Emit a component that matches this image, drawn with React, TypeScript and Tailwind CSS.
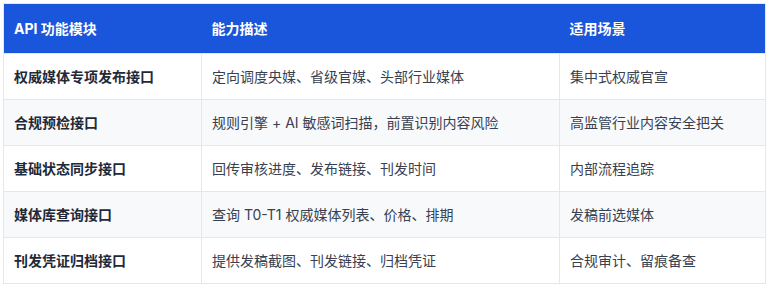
const rows = [
  ['权威媒体专项发布接口', '定向调度央媒、省级官媒、头部行业媒体', '集中式权威官宣'],
  ['合规预检接口', '规则引擎 + AI 敏感词扫描，前置识别内容风险', '高监管行业内容安全把关'],
  ['基础状态同步接口', '回传审核进度、发布链接、刊发时间', '内部流程追踪'],
  ['媒体库查询接口', '查询 T0-T1 权威媒体列表、价格、排期', '发稿前选媒体'],
  ['刊发凭证归档接口', '提供发稿截图、刊发链接、归档凭证', '合规审计、留痕备查'],
];

export default function App() {
  return (
    <div className="p-[3px] bg-white font-['Inter','Noto_Sans_CJK_SC',sans-serif] text-sm">
      <table className="w-[762px] border-collapse table-fixed border border-[#e5e7eb]">
        <colgroup>
          <col className="w-[198px]" />
          <col className="w-[358px]" />
          <col className="w-[206px]" />
        </colgroup>
        <thead>
          <tr className="h-[50px] bg-[#1a56db] text-white text-left">
            <th className="px-[10px] font-bold">API 功能模块</th>
            <th className="px-[10px] font-bold">能力描述</th>
            <th className="px-[10px] font-bold">适用场景</th>
          </tr>
        </thead>
        <tbody>
          {rows.map((r, i) => (
            <tr key={i} className={`h-[46px] ${i % 2 === 1 ? 'bg-[#f8f9fb]' : 'bg-white'}`}>
              <td className="px-[10px] border border-[#e5e7eb] font-bold text-[#1f2937]">{r[0]}</td>
              <td className="px-[10px] border border-[#e5e7eb] text-[#374151]">{r[1]}</td>
              <td className="px-[10px] border border-[#e5e7eb] text-[#374151]">{r[2]}</td>
            </tr>
          ))}
        </tbody>
      </table>
    </div>
  );
}
